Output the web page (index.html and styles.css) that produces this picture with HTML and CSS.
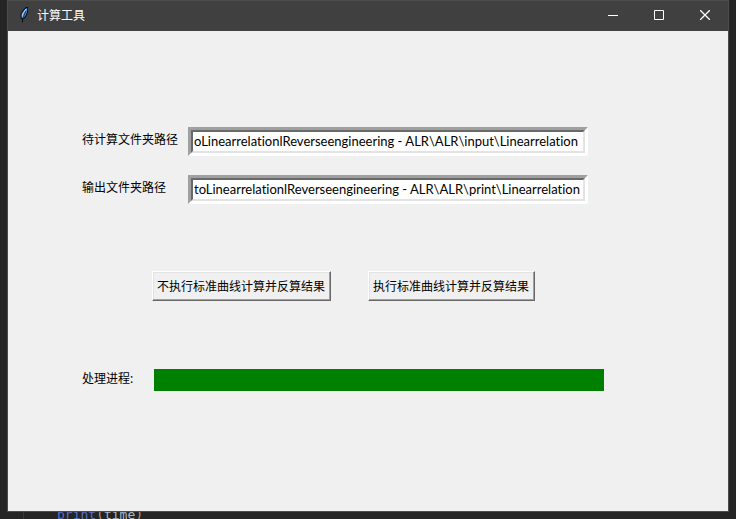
FILE: index.html
```html
<!DOCTYPE html>
<html lang="zh-CN">
<head>
<meta charset="utf-8">
<title>计算工具</title>
<link rel="stylesheet" href="styles.css">
</head>
<body>
<main class="window">
  <header class="titlebar">
    <svg class="feather" width="16" height="16" viewBox="0 0 16 16" aria-hidden="true">
      <path d="M9 0 L11 0 L11 5 L10 8 L8 11 L6 12.500 L6 15.500 L5 15.500 L5 12.500 L3.500 11 L3.500 7 L6 3Z" fill="#0c0c0c"/>
      <path d="M9.500 1 L10.300 1.500 L10 5 L8.500 8.500 L6 11.500 L4.500 10.500 L4.500 7 L7 3.500Z" fill="#4f8fe0"/>
      <path d="M9 2 L6 6.500 L5.500 9.500" fill="none" stroke="#b4d6ff"/>
      <path d="M9 4 L6.500 9.500 L5.500 12.500" fill="none" stroke="#101820" stroke-width=".8"/>
    </svg>
    <h1 class="title">计算工具</h1>
    <div class="controls">
      <button class="control" type="button" aria-label="最小化"><svg width="10" height="10" viewBox="0 0 10 10"><path d="M0 5.500H10"/></svg></button>
      <button class="control" type="button" aria-label="最大化"><svg width="10" height="10" viewBox="0 0 10 10"><path d="M.5 .5H9.500V9.500H.5Z"/></svg></button>
      <button class="control" type="button" aria-label="关闭"><svg width="10" height="10" viewBox="0 0 10 10"><path class="cross" d="M0 0L10 10M10 0L0 10"/></svg></button>
    </div>
  </header>
  <form class="form">
    <div class="row">
      <label class="label" for="input-path">待计算文件夹路径</label>
      <div class="entry"><input class="field" id="input-path" type="text" value="oLinearrelationlReverseengineering - ALR\ALR\input\Linearrelation"></div>
    </div>
    <div class="row">
      <label class="label" for="output-path">输出文件夹路径</label>
      <div class="entry"><input class="field" id="output-path" type="text" value="toLinearrelationlReverseengineering - ALR\ALR\print\Linearrelation"></div>
    </div>
    <div class="actions">
      <button class="button" type="button">不执行标准曲线计算并反算结果</button>
      <button class="button" type="button">执行标准曲线计算并反算结果</button>
    </div>
    <div class="status">
      <span class="label" id="progress-label">处理进程:</span>
      <div class="progress" role="progressbar" aria-labelledby="progress-label" aria-valuenow="100"></div>
    </div>
  </form>
</main>
<div class="editor"><code class="code"><span class="fn">print</span><span class="paren">(</span>time<span class="paren">)</span></code></div>
</body>
</html>
```
FILE: styles.css
```css
* { box-sizing: border-box; }

body {
  margin: 0;
  height: 100vh;
  display: flex;
  flex-direction: column;
  overflow: hidden;
  background: #252526;
  color: #000;
  font-family: "Noto Sans", "Noto Sans CJK SC", sans-serif;
  font-size: 12px;
}

.window {
  flex: 1;
  display: flex;
  flex-direction: column;
  margin: 0 7px;
  border: 1px solid #4c4c4c;
  background: #f0f0f0;
}

.titlebar {
  display: flex;
  align-items: center;
  height: 30px;
  padding: 0 0 2px 9px;
  background: #404040;
  color: #fff;
}

.feather { margin-right: 4px; }

.title {
  margin: 0;
  font-size: 12px;
  font-weight: 400;
}

.controls {
  display: flex;
  height: 100%;
  margin-left: auto;
}

.control {
  display: grid;
  place-items: center;
  width: 46px;
  padding: 0;
  border: 0;
  background: none;
}

.control path {
  fill: none;
  stroke: #fff;
}

.control .cross { stroke-width: 1.3; }

.form {
  display: flex;
  flex-direction: column;
  padding: 96px 74px 0;
}

.row {
  display: flex;
  align-items: center;
  margin-bottom: 19px;
}

.label {
  flex: none;
  width: 106px;
  padding-bottom: 4px;
  line-height: 18px;
}

.entry {
  flex: 1;
  max-width: 400px;
  border: 3px solid;
  border-color: #a0a0a0 #fff #fff #a0a0a0;
}

.field {
  display: block;
  width: 100%;
  height: 23px;
  padding: 0 1px 2px;
  border: 2px solid;
  border-color: #696969 #e3e3e3 #e3e3e3 #696969;
  border-radius: 0;
  outline: 0;
  background: #fff;
  color: #000;
  font-family: Lato, sans-serif;
  font-size: 13px;
  font-variant-ligatures: none;
}

.actions {
  display: flex;
  gap: 37px;
  margin: 48px 0 68px 70px;
}

.button {
  height: 30px;
  padding: 0 5px 0 4px;
  border: 1px solid;
  border-color: #fff #696969 #696969 #fff;
  border-radius: 0;
  background: #f0f0f0;
  box-shadow: inset -1px -1px #a0a0a0, inset 1px 1px #e3e3e3;
  color: #000;
  font: inherit;
  white-space: nowrap;
}

.status {
  display: flex;
  align-items: center;
}

.status .label {
  width: 72px;
  padding-bottom: 2px;
}

.progress {
  flex: 1;
  max-width: 450px;
  height: 22px;
  background: #008000;
}

.editor {
  height: 7px;
  margin-left: 23px;
  padding-left: 33px;
  border-left: 1px solid #383838;
  overflow: hidden;
}

.code {
  display: block;
  margin-top: -5px;
  color: #a9b7c6;
  font-family: "DejaVu Sans Mono", monospace;
  font-size: 13px;
  line-height: 16px;
}

.fn { color: #5a6fc8; }
.paren { color: #b09a80; }
```
